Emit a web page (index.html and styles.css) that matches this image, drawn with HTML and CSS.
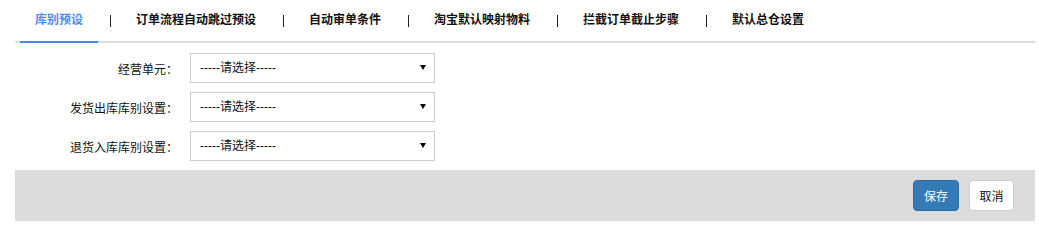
FILE: index.html
```html
<!DOCTYPE html>
<html lang="zh-CN">
<head>
<meta charset="utf-8">
<title>库别预设</title>
<link rel="stylesheet" href="styles.css">
</head>
<body>
<div class="page">
  <nav class="tabs">
    <a class="tab active">库别预设</a>
    <span class="sep"></span>
    <a class="tab">订单流程自动跳过预设</a>
    <span class="sep"></span>
    <a class="tab">自动审单条件</a>
    <span class="sep"></span>
    <a class="tab">淘宝默认映射物料</a>
    <span class="sep"></span>
    <a class="tab">拦截订单截止步骤</a>
    <span class="sep"></span>
    <a class="tab">默认总仓设置</a>
  </nav>
  <form class="form">
    <div class="row">
      <label class="label">经营单元：</label>
      <div class="select-wrap">
        <select class="select"><option>-----请选择-----</option></select>
        <svg class="arrow" width="6" height="5" viewBox="0 0 6 5"><path d="M0 0H6L3 5Z" fill="#000"/></svg>
      </div>
    </div>
    <div class="row">
      <label class="label">发货出库库别设置：</label>
      <div class="select-wrap">
        <select class="select"><option>-----请选择-----</option></select>
        <svg class="arrow" width="6" height="5" viewBox="0 0 6 5"><path d="M0 0H6L3 5Z" fill="#000"/></svg>
      </div>
    </div>
    <div class="row">
      <label class="label">退货入库库别设置：</label>
      <div class="select-wrap">
        <select class="select"><option>-----请选择-----</option></select>
        <svg class="arrow" width="6" height="5" viewBox="0 0 6 5"><path d="M0 0H6L3 5Z" fill="#000"/></svg>
      </div>
    </div>
  </form>
  <div class="footer">
    <button class="btn btn-primary" type="button">保存</button>
    <button class="btn btn-default" type="button">取消</button>
  </div>
</div>
</body>
</html>
```

FILE: styles.css
```css
html, body {
  margin: 0;
  padding: 0;
  background: #fff;
}
body {
  font-family: "Liberation Sans", "Noto Sans CJK SC", sans-serif;
  font-size: 12px;
  color: #333;
}
.page {
  width: 1020px;
  margin-left: 15px;
}
.tabs {
  display: flex;
  align-items: center;
  height: 41px;
  border-bottom: 2px solid #dddddd;
  padding-left: 5px;
}
.tab {
  position: relative;
  display: block;
  padding: 0 15px;
  line-height: 41px;
  font-weight: bold;
  color: #111;
  white-space: nowrap;
}
.tab.active {
  color: #4d8cf2;
}
.tab.active::after {
  content: "";
  position: absolute;
  left: 0;
  right: 0;
  bottom: -2px;
  height: 2px;
  background: #4a89f3;
}
.sep {
  width: 1px;
  height: 12px;
  background: #222;
  margin: 0 10px 0 12px;
}
.form {
  padding-top: 10px;
  display: flex;
  flex-direction: column;
  gap: 9px;
}
.row {
  display: flex;
  align-items: center;
  height: 30px;
}
.label {
  width: 163px;
  text-align: right;
  color: #111;
  margin-right: 12px;
}
.select-wrap {
  position: relative;
  width: 245px;
  height: 30px;
}
.select {
  -webkit-appearance: none;
  appearance: none;
  box-sizing: border-box;
  width: 100%;
  height: 100%;
  margin: 0;
  border: 1px solid #cccccc;
  border-radius: 0;
  background: #fff;
  padding: 0 9px;
  font-family: "Liberation Sans", "Noto Sans CJK SC", sans-serif;
  font-size: 12px;
  color: #111;
  outline: none;
}
.arrow {
  position: absolute;
  right: 9px;
  top: 12px;
  pointer-events: none;
}
.footer {
  margin-top: 9px;
  height: 51px;
  background: #dcdcdc;
  display: flex;
  justify-content: flex-end;
  align-items: flex-start;
  padding: 10px 21px 0 0;
  box-sizing: border-box;
  gap: 10px;
}
.btn {
  box-sizing: border-box;
  height: 31px;
  padding: 0;
  border-radius: 4px;
  font-family: "Liberation Sans", "Noto Sans CJK SC", sans-serif;
  font-size: 12px;
  white-space: nowrap;
  cursor: pointer;
}
.btn-primary {
  width: 46px;
  background: #337ab7;
  border: 1px solid #2e6da4;
  color: #fff;
}
.btn-default {
  width: 45px;
  background: #fff;
  border: 1px solid #cccccc;
  color: #111;
}
```
